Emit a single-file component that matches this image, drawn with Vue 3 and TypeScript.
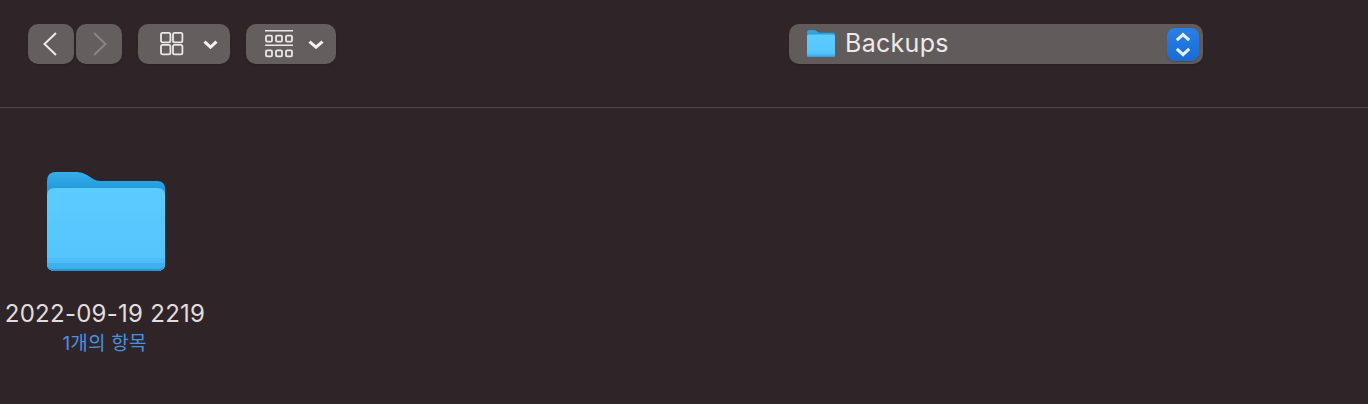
<template>
  <div class="finder">
    <svg width="0" height="0" class="defs">
      <defs>
        <linearGradient id="face" x1="0" y1="0" x2="0" y2="1">
          <stop offset="0" stop-color="#5ccbff" />
          <stop offset="1" stop-color="#54c3fb" />
        </linearGradient>
        <linearGradient id="back" x1="0" y1="0" x2="0" y2="1">
          <stop offset="0" stop-color="#37ade9" />
          <stop offset="0.2" stop-color="#1f98da" />
        </linearGradient>
        <g id="folder-shape">
          <path d="M0 92 V10 Q0 1 9 1 H30 Q35 1 40 4 L47 8.5 Q50 10 54 10 H110 Q118 10 118 18 V92 Q118 100 110 100 H8 Q0 100 0 92 Z" fill="url(#back)" />
          <path d="M0 92 V24 Q0 17 8 17 H110 Q118 17 118 24 V92 Q118 100 110 100 H8 Q0 100 0 92 Z" fill="url(#face)" />
          <path d="M0 87 H118 V92 Q118 100 110 100 H8 Q0 100 0 92 Z" fill="#4dbcf7" />
          <path d="M0 92 H118 Q118 100 110 100 H8 Q0 100 0 92 Z" fill="#3fb0ee" />
          <path d="M1 96 Q2 100 8 100 H110 Q116 100 117 96 Q116 98 110 98 H8 Q2 98 1 96 Z" fill="#2596d6" />
        </g>
      </defs>
    </svg>

    <header class="toolbar">
      <div class="nav-group">
        <button class="tool-btn nav-btn">
          <svg width="16" height="26" viewBox="0 0 16 26"><path d="M13 2 L1.5 13 L13 24" class="stroke" /></svg>
        </button>
        <button class="tool-btn nav-btn">
          <svg width="16" height="26" viewBox="0 0 16 26"><path d="M3 2 L14.5 13 L3 24" class="stroke dim" /></svg>
        </button>
      </div>

      <button class="tool-btn view-btn">
        <svg width="24" height="24" viewBox="0 0 24 24" class="view-icon">
          <rect v-for="c in gridCells" :key="c.x + '-' + c.y" :x="c.x" :y="c.y" width="9.4" height="9.4" rx="1.6" class="thin" />
        </svg>
        <svg width="16" height="10" viewBox="0 0 16 10"><path d="M1.5 2.6 L7.5 8.2 L13.5 2.6" class="chev" /></svg>
      </button>

      <button class="tool-btn arrange-btn">
        <svg width="28" height="28" viewBox="0 0 28 28" class="arrange-icon">
          <path d="M0 .8 H28 M0 15.2 H28" class="line" />
          <rect v-for="c in groupCells" :key="c.x + '-' + c.y" :x="c.x" :y="c.y" width="6" height="6" rx="1.2" class="thin" />
        </svg>
        <svg width="16" height="10" viewBox="0 0 16 10"><path d="M1.5 2.6 L8 8.2 L14.5 2.6" class="chev" /></svg>
      </button>

      <div class="path-select">
        <svg width="28" height="27" viewBox="0 0 118 100" preserveAspectRatio="none" class="path-folder">
          <use href="#folder-shape" />
        </svg>
        <span class="path-label">Backups</span>
        <span class="stepper">
          <svg width="18" height="28" viewBox="0 0 18 28">
            <path d="M2.8 9.2 L9 3.6 L15.2 9.2 M2.8 17.8 L9 23.6 L15.2 17.8" class="step-chev" />
          </svg>
        </span>
      </div>
    </header>

    <main class="content">
      <div class="item">
        <svg width="118" height="100" viewBox="0 0 118 100" class="folder">
          <use href="#folder-shape" />
        </svg>
        <div class="item-name">2022-09-19 2219</div>
        <div class="item-count">1개의 항목</div>
      </div>
    </main>
  </div>
</template>

<script setup lang="ts">
const gridCells = [
  { x: 1, y: 0.9 },
  { x: 13, y: 0.9 },
  { x: 1, y: 12.9 },
  { x: 13, y: 12.9 },
]

const groupCells = [1, 11, 21].flatMap((x) => [
  { x, y: 5.6 },
  { x, y: 20.4 },
])
</script>

<style>
html,
body {
  background: #2f2528;
}
</style>

<style scoped>
.finder {
  width: 1368px;
  height: 404px;
  background: #2f2528;
  font-family: "Inter", "Noto Sans CJK KR", sans-serif;
  overflow: hidden;
}

.defs {
  display: block;
  height: 0;
}

.toolbar {
  box-sizing: border-box;
  height: 108px;
  padding: 24px 0 0 28px;
  display: flex;
  align-items: flex-start;
  border-bottom: 1px solid #50474a;
}

.nav-group {
  display: flex;
  gap: 2px;
  margin-right: 16px;
}

.tool-btn {
  height: 40px;
  padding: 0;
  border: 0;
  border-radius: 10px;
  background: #655e5e;
  display: flex;
  align-items: center;
  box-shadow: 0 1px 2px rgba(0, 0, 0, 0.18);
}

.nav-btn {
  width: 46px;
  justify-content: center;
}

.view-btn {
  width: 92px;
  margin-right: 16px;
  padding-left: 22px;
  gap: 19px;
}

.arrange-btn {
  width: 90px;
  padding-left: 19px;
  gap: 15px;
  margin-right: 453px;
}

.stroke {
  fill: none;
  stroke: #efeaea;
  stroke-width: 2;
}

.stroke.dim {
  stroke: #8a8483;
}

.thin {
  fill: none;
  stroke: #ece7e7;
  stroke-width: 1.8;
}

.line {
  fill: none;
  stroke: #ece7e7;
  stroke-width: 1.6;
}

.chev {
  fill: none;
  stroke: #f4f0f0;
  stroke-width: 3;
}

.path-select {
  box-sizing: border-box;
  width: 414px;
  height: 40px;
  border-radius: 10px;
  background: #625b5b;
  display: flex;
  align-items: center;
  padding: 0 4px 0 18px;
  box-shadow: 0 1px 2px rgba(0, 0, 0, 0.18);
}

.path-folder {
  margin-bottom: 1px;
}

.path-label {
  margin-left: 10px;
  margin-bottom: 2px;
  font-size: 25px;
  letter-spacing: 0.3px;
  color: #efeaea;
  line-height: 38px;
}

.stepper {
  margin-left: auto;
  margin-top: 1px;
  width: 32px;
  height: 33px;
  border-radius: 8px;
  background: linear-gradient(#2a80e4, #186cd6);
  display: flex;
  align-items: center;
  justify-content: center;
  box-shadow: 0 1px 1px rgba(0, 0, 0, 0.2);
}

.step-chev {
  fill: none;
  stroke: #e4f0ff;
  stroke-width: 3;
}

.content {
  padding: 63px 0 0 5px;
}

.item {
  width: 200px;
  display: flex;
  flex-direction: column;
  align-items: center;
}

.folder {
  display: block;
  margin-left: 2px;
}

.item-name {
  margin-top: 28px;
  font-size: 24px;
  line-height: 30px;
  letter-spacing: 0.27px;
  color: #e2dddd;
  white-space: nowrap;
}

.item-count {
  margin-top: 3px;
  margin-right: 1px;
  font-size: 19px;
  line-height: 24px;
  letter-spacing: 0.2px;
  color: #4a90e2;
  white-space: nowrap;
}
</style>
